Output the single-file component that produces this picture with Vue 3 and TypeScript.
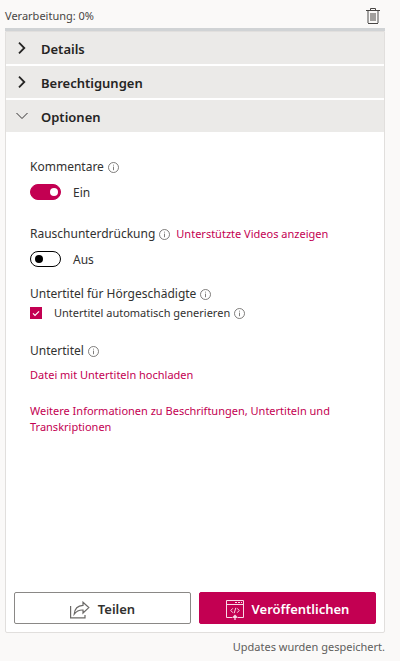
<script setup lang="ts">
import { defineComponent, h, ref } from 'vue'

interface Section {
  title: string
  open: boolean
}

const sections = ref<Section[]>([
  { title: 'Details', open: false },
  { title: 'Berechtigungen', open: false },
  { title: 'Optionen', open: true },
])

const comments = ref(true)
const noise = ref(false)
const captions = ref(true)

const InfoIcon = defineComponent({
  render: () =>
    h('svg', { width: 11, height: 11, viewBox: '0 0 11 11', fill: 'none', 'aria-hidden': 'true' }, [
      h('circle', { cx: 5.5, cy: 5.5, r: 5, stroke: '#605e5c', 'stroke-width': 0.8 }),
      h('path', { d: 'M5.5 4.6V8.2M5.5 2.7V3.6', stroke: '#605e5c', 'stroke-width': 0.8 }),
    ]),
})
</script>

<template>
  <main class="page">
    <header class="status">
      <span>Verarbeitung: 0%</span>
      <button class="trash" type="button" aria-label="Löschen">
        <svg width="14" height="17" viewBox="0 0 14 17" fill="none">
          <path d="M4.5 2V.5H9.5V2" stroke="#484644" />
          <path d="M0 2.5H14" stroke="#484644" />
          <path d="M2 3V15M12 3V15" stroke="#a3a2a1" stroke-width="2" />
          <path d="M2 15.5H12" stroke="#484644" />
          <path d="M4 5H10V13H4Z" fill="#a19f9d" />
        </svg>
      </button>
    </header>
    <div class="progress" role="progressbar" aria-valuenow="0" aria-label="Verarbeitung"></div>

    <section class="panel">
      <div class="sections">
        <button
          v-for="s in sections"
          :key="s.title"
          class="section"
          type="button"
          :aria-expanded="s.open"
          @click="s.open = !s.open"
        >
          <svg v-if="s.open" width="12" height="12" viewBox="0 0 12 12" fill="none">
            <path d="M.5 3L6 8.5L11.5 3" stroke="#323130" />
          </svg>
          <svg v-else width="12" height="12" viewBox="0 0 12 12" fill="none">
            <path d="M3 .7L8.3 6L3 11.3" stroke="#252423" stroke-width="1.8" />
          </svg>
          <span>{{ s.title }}</span>
        </button>
      </div>

      <div class="options">
        <div class="group">
          <div class="label"><label for="comments">Kommentare</label><InfoIcon /></div>
          <label class="toggle">
            <input id="comments" v-model="comments" type="checkbox" role="switch" />
            <span>{{ comments ? 'Ein' : 'Aus' }}</span>
          </label>
        </div>

        <div class="group">
          <div class="label">
            <label for="noise">Rauschunterdrückung</label><InfoIcon />
            <a class="aside" href="#">Unterstützte Videos anzeigen</a>
          </div>
          <label class="toggle">
            <input id="noise" v-model="noise" type="checkbox" role="switch" />
            <span>{{ noise ? 'Ein' : 'Aus' }}</span>
          </label>
        </div>

        <div class="captions">
          <div class="label"><span>Untertitel für Hörgeschädigte</span><InfoIcon /></div>
          <div class="check">
            <span class="tick">
              <input id="captions" v-model="captions" type="checkbox" />
              <svg v-if="captions" width="12" height="12" viewBox="0 0 12 12" fill="none">
                <path d="M3 6.3L5 8.3L9 4.3" stroke="#fff" stroke-width="1.2" />
              </svg>
            </span>
            <label for="captions">Untertitel automatisch generieren</label><InfoIcon />
          </div>
        </div>

        <div class="files">
          <div class="label"><span>Untertitel</span><InfoIcon /></div>
          <a href="#">Datei mit Untertiteln hochladen</a>
        </div>
        <a href="#">Weitere Informationen zu Beschriftungen, Untertiteln und Transkriptionen</a>
      </div>

      <div class="actions">
        <button class="action" type="button">
          <svg width="20" height="18" viewBox="0 0 20 18" fill="none" stroke="#6b6967" stroke-width="1.2">
            <path d="M.6 5V16.9H15V14" />
            <path d="M13 1.3L18.8 6.6L13 12V9C9 8.8 6.5 10 4.2 13.2C4.6 8 7.8 4.5 13 4.3Z" />
          </svg>
          <span>Teilen</span>
        </button>
        <button class="action primary" type="button">
          <svg width="18" height="20" viewBox="0 0 18 20" fill="none" stroke="#f8d9e6">
            <path d="M6.5 17.5H.5V.5H17.5V17.5H11.5" />
            <path d="M.5 4.5H17.5" />
            <path d="M9 2.5H11M12 2.5H14M15 2.5H16" />
            <path d="M6.8 8.3L4.8 10.5L6.8 12.7M11.2 8.3L13.2 10.5L11.2 12.7M9.8 7.8L8.2 13.2" />
            <path d="M9 20V15.5M7 17.5L9 15.5L11 17.5" stroke-width="1.3" />
          </svg>
          <span>Veröffentlichen</span>
        </button>
      </div>
    </section>
    <footer class="saved">Updates wurden gespeichert.</footer>
  </main>
</template>

<style>
body {
  background: #faf9f8;
}
</style>

<style scoped>
.page {
  box-sizing: border-box;
  display: flex;
  flex-direction: column;
  min-height: 100vh;
  padding: 4px 15px 6px 5px;
  background: #faf9f8;
  color: #323130;
  font: 11px/16px "Noto Sans", sans-serif;
}
button {
  font: inherit;
  color: inherit;
  cursor: pointer;
}
svg {
  flex: none;
  display: block;
}
a {
  color: #c30052;
  text-decoration: none;
}
.status {
  display: flex;
  align-items: center;
  justify-content: space-between;
  height: 24px;
  padding-right: 5px;
  color: #484644;
}
.trash {
  padding: 0;
  border: 0;
  background: none;
}
.progress {
  height: 3px;
  background: #d0d3d5;
}
.panel {
  flex: 1;
  display: flex;
  flex-direction: column;
  border: 1px solid #e1dfdd;
  border-radius: 0 0 2px 2px;
  background: #fff;
}
.sections {
  display: flex;
  flex-direction: column;
  gap: 2px;
}
.section {
  display: flex;
  align-items: center;
  gap: 13px;
  height: 32px;
  padding: 2px 10px 0;
  border: 0;
  background: #ebeae8;
  color: #252423;
  font-size: 13px;
  font-weight: 600;
}
.section svg {
  margin-bottom: 2px;
}
.options {
  flex: 1;
  padding: 25px 24px 24px;
}
.group {
  margin-bottom: 22px;
}
.group + .captions {
  margin-top: -7px;
}
.label {
  display: flex;
  align-items: center;
  gap: 4px;
  font-size: 12px;
  line-height: 20px;
}
.aside {
  margin-left: 2px;
  font-size: 11px;
}
.toggle {
  display: flex;
  align-items: center;
  gap: 12px;
  margin-top: 5px;
  font-size: 12px;
  line-height: 20px;
}
.toggle span {
  padding-top: 2px;
  line-height: 18px;
}
.toggle input {
  appearance: none;
  display: flex;
  align-items: center;
  box-sizing: border-box;
  width: 31px;
  height: 16px;
  margin: 0;
  padding: 0 4px;
  border: 1px solid #000;
  border-radius: 8px;
  background: #fff;
}
.toggle input::before {
  content: "";
  width: 8px;
  height: 8px;
  border-radius: 50%;
  background: #000;
}
.toggle input:checked {
  justify-content: flex-end;
  padding: 0 2px;
  border-color: #c30052;
  background: #c30052;
}
.toggle input:checked::before {
  background: #fff;
}
.check {
  display: flex;
  align-items: center;
  gap: 4px;
  line-height: 18px;
}
.tick {
  display: grid;
  margin-right: 8px;
}
.tick > * {
  grid-area: 1 / 1;
}
.tick input {
  appearance: none;
  box-sizing: border-box;
  width: 12px;
  height: 12px;
  margin: 0;
  border: 1px solid #c30052;
}
.tick input:checked {
  background: #c30052;
}
.tick svg {
  pointer-events: none;
}
.files {
  display: flex;
  flex-direction: column;
  align-items: flex-start;
  gap: 6px;
  margin: 19px 0 20px;
}
.actions {
  display: flex;
  gap: 8px;
  padding: 0 8px 8px;
}
.action {
  flex: 1;
  display: flex;
  align-items: center;
  justify-content: center;
  gap: 8px;
  box-sizing: border-box;
  height: 32px;
  padding: 2px 8px 0;
  border: 1px solid #8a8886;
  border-radius: 2px;
  background: #fff;
  font-size: 13px;
  font-weight: 600;
}
.action svg {
  margin-top: 2px;
}
.primary {
  border-color: #c30052;
  background: #c30052;
  color: #fff;
}
.saved {
  padding-top: 6px;
  color: #605e5c;
  text-align: right;
}
</style>
